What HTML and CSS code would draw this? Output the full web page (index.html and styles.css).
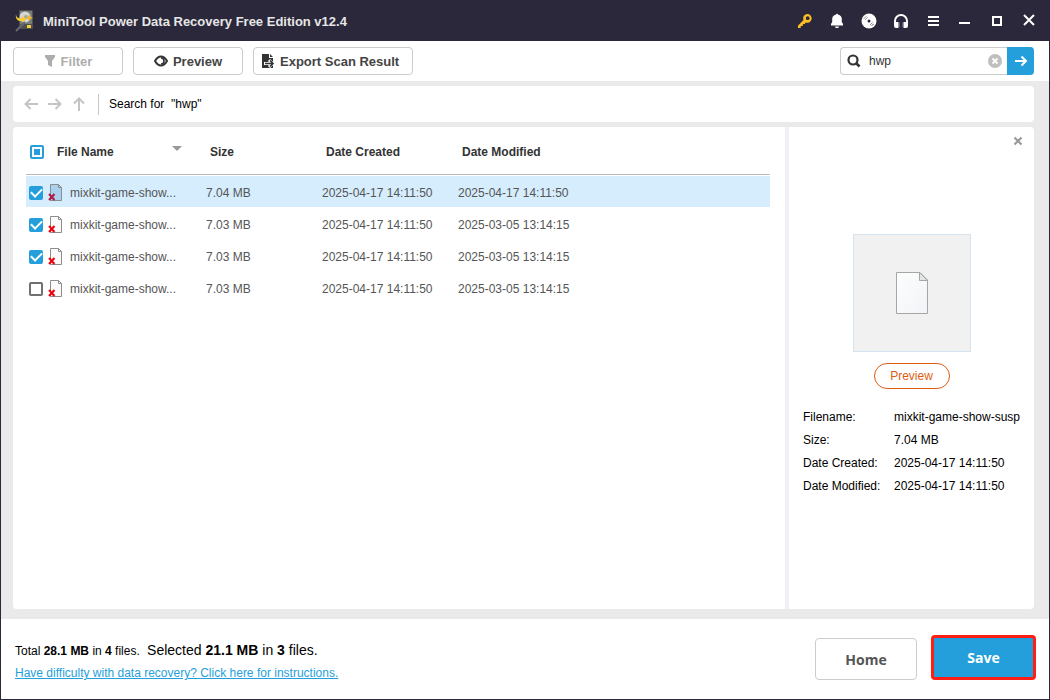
FILE: index.html
```html
<!DOCTYPE html>
<html lang="en">
<head>
    <meta charset="UTF-8">
    <meta name="viewport" content="width=device-width, initial-scale=1.0">
    <title>MiniTool Power Data Recovery</title>
    <link rel="stylesheet" href="styles.css">
</head>
<body>

    <!-- Title bar -->
    <header class="titlebar">
        <svg class="app-icon" width="20" height="22" viewBox="0 0 20 22">
            <rect x="4" y="0" width="14" height="19" rx="1" fill="#4c5052"/>
            <rect x="5" y="1" width="12" height="13" fill="#777b7a"/>
            <circle cx="10" cy="7" r="5.500" fill="#d3d6d2"/>
            <circle cx="11" cy="7" r="2" fill="#a2a5a6"/>
            <path d="M1 4c0 4 3 5 6 4V6l4 3-3 4v-2C3 12 0 9 1 4z" fill="#f5cc2c"/>
            <path d="M14 4l1 2.500L18 8l-3 1-1 2-1-2-3-1 3-1z" fill="#f6b526"/>
            <path d="M1 21l9-9" stroke="#6a6a72" stroke-width="2"/>
            <rect x="12" y="15" width="4" height="3" fill="#f8cf38"/>
        </svg>
        <h1>MiniTool Power Data Recovery Free Edition v12.4</h1>
        <div class="window-tools">
            <button type="button" aria-label="Register">
                <svg width="16" height="16" viewBox="0 0 16 16"><path fill="#fbbf24" fill-rule="evenodd" d="M10 1a4.300 4.300 0 0 0-3.500 6L.9 12.700 1 15h2.500l.4-2h1.700l.5-2h1.600l1-1.500A4.400 4.400 0 1 0 10 1zm.7 2.300a1.900 1.900 0 1 1 0 3.800 1.900 1.900 0 0 1 0-3.800z"/></svg>
            </button>
            <button type="button" aria-label="Notifications">
                <svg width="16" height="16" viewBox="0 0 16 16"><path fill="#fff" d="M8 .5l1 1c2.700.5 3.800 2.500 3.800 4.500v3L14 11v1.500H2V11l1.200-2V6c0-2 1.100-4 3.800-4.500zM6 13.500h4c0 1-.9 1.500-2 1.500s-2-.5-2-1.500z"/></svg>
            </button>
            <button type="button" aria-label="Bootable media">
                <svg width="16" height="16" viewBox="0 0 16 16"><circle cx="8" cy="8" r="7.500" fill="#fff"/><circle cx="8" cy="8" r="1.500" fill="#2a283a"/><path d="M3 5.500L5.500 3M4.500 6.500l2-2M10.500 13l2.500-2.500M9.500 11.500l2-2" stroke="#2a283a" stroke-dasharray="1 .6"/></svg>
            </button>
            <button type="button" aria-label="Support">
                <svg width="16" height="16" viewBox="0 0 16 16"><path d="M2 10V8a6 6 0 0 1 12 0v2" fill="none" stroke="#fff" stroke-width="2"/><path fill="#fff" d="M1 9h4.500v6H3a2 2 0 0 1-2-2zM15 9h-4.500v6H13a2 2 0 0 0 2-2z"/><path d="M6 9.500v4.500M10 9.500v4.500" stroke="#9c9ba5"/></svg>
            </button>
            <button type="button" aria-label="Menu">
                <svg width="16" height="16" viewBox="0 0 16 16"><path d="M3 4h11M3 8h11M3 12h11" stroke="#fff" stroke-width="2"/></svg>
            </button>
            <button type="button" aria-label="Minimize">
                <svg width="16" height="16" viewBox="0 0 16 16"><path d="M2 10h11" stroke="#fff" stroke-width="2"/></svg>
            </button>
            <button type="button" aria-label="Maximize">
                <svg width="16" height="16" viewBox="0 0 16 16"><rect x="4" y="4" width="8" height="8" fill="none" stroke="#fff" stroke-width="2"/></svg>
            </button>
            <button type="button" aria-label="Close">
                <svg width="16" height="16" viewBox="0 0 16 16"><path d="M3 2l10 10M13 2L3 12" stroke="#fff" stroke-width="2"/></svg>
            </button>
        </div>
    </header>

    <!-- Toolbar -->
    <div class="toolbar">
        <button type="button" class="tool" disabled>
            <svg width="12" height="14" viewBox="0 0 12 14"><path fill="#adadad" d="M1 1h10v2L8 7v6l-4-2V7L1 3z"/></svg>
            Filter
        </button>
        <button type="button" class="tool">
            <svg width="14" height="14" viewBox="0 0 14 14"><path d="M1 7c2-3.500 4-4.500 6-4.500s4 1 6 4.500c-2 3.500-4 4.500-6 4.500S3 10.500 1 7z" fill="none" stroke="#333" stroke-width="2"/><path d="M7 4a3 3 0 1 0 0 6 3 3 0 0 1 0-6z" fill="#333"/><path d="M7 4a3 3 0 0 1 0 6" fill="none" stroke="#333" stroke-width="1.600"/></svg>
            Preview
        </button>
        <button type="button" class="tool tool-wide">
            <svg width="14" height="14" viewBox="0 0 14 14"><path fill="#333" d="M1 0h7v4h4v10H1zM9 0l3 3H9z"/><path d="M3 9.500h7M8 6l3.500 3.500L8 13" fill="none" stroke="#fff" stroke-width="3"/><path d="M4 9.500h8M9 6.500l3 3-3 3" fill="none" stroke="#333" stroke-width="1.600"/></svg>
            Export Scan Result
        </button>
        <form class="search">
            <svg width="14" height="14" viewBox="0 0 14 14"><circle cx="6" cy="6" r="4.500" fill="none" stroke="#333" stroke-width="2.200"/><path d="M9 9l3.500 3.500" stroke="#333" stroke-width="2.600"/></svg>
            <input type="text" value="hwp" aria-label="Search files">
            <button type="reset" class="clear" aria-label="Clear">
                <svg width="14" height="14" viewBox="0 0 14 14"><circle cx="7" cy="7" r="7" fill="#bfbfbf"/><path d="M4.500 4.500l5 5M9.500 4.500l-5 5" stroke="#fff" stroke-width="2"/></svg>
            </button>
            <button type="button" class="go" aria-label="Search">
                <svg width="14" height="14" viewBox="0 0 14 14"><path d="M1 7h11M7.500 2.500L12 7l-4.500 4.500" fill="none" stroke="#fff" stroke-width="2"/></svg>
            </button>
        </form>
    </div>

    <main class="workspace">
        <nav class="pathbar">
            <button type="button" aria-label="Back"><svg width="14" height="14" viewBox="0 0 14 14"><path d="M14 7H2M6.500 2L1.500 7l5 5"/></svg></button>
            <button type="button" aria-label="Forward"><svg width="14" height="14" viewBox="0 0 14 14"><path d="M0 7h12M7.500 2l5 5-5 5"/></svg></button>
            <button type="button" aria-label="Up"><svg width="14" height="14" viewBox="0 0 14 14"><path d="M7 14V2M2 6.500l5-5 5 5"/></svg></button>
            <p>Search for&nbsp; "hwp"</p>
        </nav>

        <div class="panels">
            <!-- File list -->
            <section class="files">
                <table>
                    <colgroup>
                        <col class="col-name">
                        <col class="col-size">
                        <col class="col-created">
                        <col>
                    </colgroup>
                    <thead>
                        <tr>
                            <th>
                                <div class="name">
                                    <input type="checkbox" class="check partial" aria-label="Select all">
                                    <span class="heading">File Name</span>
                                    <svg class="sort" width="10" height="6" viewBox="0 0 10 6"><path fill="#999" d="M0 0h10L5 5z"/></svg>
                                </div>
                            </th>
                            <th>Size</th>
                            <th>Date Created</th>
                            <th>Date Modified</th>
                        </tr>
                    </thead>
                    <tbody>
                        <tr class="selected">
                            <td>
                                <div class="name">
                                    <input type="checkbox" class="check" id="file1" checked>
                                    <svg width="14" height="18" viewBox="0 0 14 18"><use href="#deleted-file"/></svg>
                                    <label for="file1">mixkit-game-show...</label>
                                </div>
                            </td>
                            <td>7.04 MB</td>
                            <td>2025-04-17 14:11:50</td>
                            <td>2025-04-17 14:11:50</td>
                        </tr>
                        <tr>
                            <td>
                                <div class="name">
                                    <input type="checkbox" class="check" id="file2" checked>
                                    <svg width="14" height="18" viewBox="0 0 14 18"><use href="#deleted-file"/></svg>
                                    <label for="file2">mixkit-game-show...</label>
                                </div>
                            </td>
                            <td>7.03 MB</td>
                            <td>2025-04-17 14:11:50</td>
                            <td>2025-03-05 13:14:15</td>
                        </tr>
                        <tr>
                            <td>
                                <div class="name">
                                    <input type="checkbox" class="check" id="file3" checked>
                                    <svg width="14" height="18" viewBox="0 0 14 18"><use href="#deleted-file"/></svg>
                                    <label for="file3">mixkit-game-show...</label>
                                </div>
                            </td>
                            <td>7.03 MB</td>
                            <td>2025-04-17 14:11:50</td>
                            <td>2025-03-05 13:14:15</td>
                        </tr>
                        <tr>
                            <td>
                                <div class="name">
                                    <input type="checkbox" class="check" id="file4">
                                    <svg width="14" height="18" viewBox="0 0 14 18"><use href="#deleted-file"/></svg>
                                    <label for="file4">mixkit-game-show...</label>
                                </div>
                            </td>
                            <td>7.03 MB</td>
                            <td>2025-04-17 14:11:50</td>
                            <td>2025-03-05 13:14:15</td>
                        </tr>
                    </tbody>
                </table>
            </section>

            <!-- Preview panel -->
            <aside class="details">
                <button type="button" class="close-details" aria-label="Close preview">
                    <svg width="10" height="10" viewBox="0 0 10 10"><path d="M1.500 1.500l7 7M8.500 1.500l-7 7" stroke="#999" stroke-width="2.200"/></svg>
                </button>
                <div class="thumb">
                    <svg width="34" height="44" viewBox="0 0 34 44">
                        <defs>
                            <linearGradient id="paper" x1="0" y1="0" x2="1" y2="1">
                                <stop offset="0" stop-color="#fdfdfd"/>
                                <stop offset="1" stop-color="#f1f4f7"/>
                            </linearGradient>
                        </defs>
                        <path d="M1.500 1.500H25L32.500 9v33.500h-31z" fill="url(#paper)" stroke="#a5a7a6"/>
                        <path d="M24.500 1.500v8h8z" fill="#e4e5e5" stroke="#a5a7a6"/>
                    </svg>
                </div>
                <button type="button" class="preview">Preview</button>
                <dl>
                    <dt>Filename:</dt><dd>mixkit-game-show-susp</dd>
                    <dt>Size:</dt><dd>7.04 MB</dd>
                    <dt>Date Created:</dt><dd>2025-04-17 14:11:50</dd>
                    <dt>Date Modified:</dt><dd>2025-04-17 14:11:50</dd>
                </dl>
            </aside>
        </div>
    </main>

    <!-- Footer -->
    <footer class="footer">
        <div class="summary">
            <p>Total <b>28.1 MB</b> in <b>4</b> files. <span class="chosen">Selected <b>21.1 MB</b> in <b>3</b> files.</span></p>
            <a href="#help">Have difficulty with data recovery? Click here for instructions.</a>
        </div>
        <button type="button" class="home">Home</button>
        <button type="button" class="save">Save</button>
    </footer>

    <!-- Shared file icon -->
    <svg class="sprite" width="0" height="0">
        <symbol id="deleted-file" viewBox="0 0 14 18">
            <path class="page" d="M2.500 .5h8l3 3v13h-11z"/>
            <path class="fold" d="M10.500 .5v3h3"/>
            <path class="cross" d="M1 10l5.500 6M6.500 10L1 16"/>
        </symbol>
    </svg>

</body>
</html>
```
FILE: styles.css
```css
* {
    box-sizing: border-box;
}

body {
    margin: 0;
    min-height: 100vh;
    display: flex;
    flex-direction: column;
    border: 1px solid #2a283a;
    background-color: #fff;
    color: #000;
    font-family: "Liberation Sans", Arial, sans-serif;
    font-size: 12px;
}

h1, p, dl, dd {
    margin: 0;
}

button {
    padding: 0;
    border: 0;
    background: none;
    font-family: inherit;
    cursor: pointer;
}

svg {
    display: block;
    flex: none;
}

.sprite {
    position: absolute;
}

/* Title bar */
.titlebar {
    display: flex;
    align-items: center;
    height: 40px;
    padding: 0 4px 0 14px;
    background-color: #2a283a;
}

.titlebar h1 {
    margin-left: 8px;
    color: #e6e6e6;
    font-size: 13px;
}

.window-tools {
    display: flex;
    margin-left: auto;
}

.window-tools button {
    display: flex;
    justify-content: center;
    width: 32px;
}

/* Toolbar */
.toolbar {
    display: flex;
    align-items: center;
    gap: 10px;
    height: 40px;
    padding: 0 15px 0 12px;
}

.tool {
    display: flex;
    align-items: center;
    justify-content: center;
    gap: 5px;
    width: 110px;
    height: 28px;
    border: 1px solid #ccc;
    border-radius: 4px;
    color: #444;
    font-size: 13px;
    font-weight: bold;
}

.tool-wide {
    justify-content: flex-start;
    width: 160px;
    padding-left: 7px;
}

.tool:disabled {
    color: #adadad;
}

.search {
    display: flex;
    align-items: center;
    width: 194px;
    height: 28px;
    margin-left: auto;
    padding-left: 6px;
    border: 1px solid #ccc;
    border-right: 0;
    border-radius: 4px;
}

.search input {
    flex: 1;
    min-width: 0;
    padding: 0 8px;
    border: 0;
    outline: 0;
    background: none;
    color: #333;
    font-family: inherit;
    font-size: 12px;
}

.go {
    display: flex;
    align-items: center;
    justify-content: center;
    width: 27px;
    height: 28px;
    margin-left: 5px;
    border-radius: 0 4px 4px 0;
    background-color: #259fdb;
}

/* Work area */
.workspace {
    flex: 1;
    display: flex;
    flex-direction: column;
    gap: 5px;
    padding: 5px 15px 10px 12px;
    background-color: #eaeaea;
}

.pathbar {
    display: flex;
    align-items: center;
    gap: 10px;
    height: 36px;
    padding: 0 11px;
    border-radius: 4px;
    background-color: #fff;
}

.pathbar path {
    fill: none;
    stroke: #c4c4c4;
    stroke-width: 2;
}

.pathbar p {
    margin-left: 2px;
    padding-left: 10px;
    border-left: 1px solid #c8c8c8;
    line-height: 21px;
}

.panels {
    flex: 1;
    display: flex;
    border-radius: 4px;
    background-color: #fff;
}

/* File list */
.files {
    flex: 1;
    min-width: 0;
    padding: 0 15px 0 13px;
}

.files table {
    width: 100%;
    table-layout: fixed;
    border-collapse: separate;
    border-spacing: 0 1px;
}

.col-name {
    width: 176px;
}

.col-size {
    width: 116px;
}

.col-created {
    width: 136px;
}

.files th {
    height: 47px;
    padding: 2px 0 0 8px;
    border-bottom: 1px solid #b9b9b9;
    color: #333;
    text-align: left;
}

.files td {
    height: 31px;
    padding: 2px 0 0 4px;
    color: #555;
    white-space: nowrap;
}

.files th:first-child {
    padding-left: 4px;
}

.files td:first-child {
    padding-left: 3px;
}

.selected td {
    background-color: #d6edfe;
}

.name {
    display: flex;
    align-items: center;
    gap: 5px;
}

.name label {
    margin-left: 3px;
}

.heading {
    margin-left: 8px;
}

.sort {
    margin: 0 20px 6px auto;
}

.check {
    appearance: none;
    display: grid;
    place-content: center;
    flex: none;
    width: 14px;
    height: 14px;
    margin: 0;
    border: 2px solid #707070;
    border-radius: 2px;
    background-color: #fff;
}

.check:checked {
    border-color: #259fdb;
    background-color: #259fdb;
}

.check:checked::before {
    content: "";
    width: 9px;
    height: 5px;
    margin-bottom: 3px;
    border: solid #fff;
    border-width: 0 0 2px 2px;
    transform: rotate(-45deg);
}

.partial {
    border-color: #259fdb;
}

.partial::before {
    content: "";
    width: 6px;
    height: 6px;
    background-color: #259fdb;
}

.page {
    fill: var(--page-fill, #fafafa);
    stroke: #8c8c8c;
}

.fold {
    fill: none;
    stroke: #8c8c8c;
}

.cross {
    stroke: var(--cross, #f0000c);
    stroke-width: 2;
}

.selected {
    --page-fill: #a9d0ef;
    --cross: #b01840;
}

/* Preview panel */
.details {
    display: flex;
    flex-direction: column;
    align-items: center;
    width: 249px;
    padding: 9px 11px 0;
    border-left: 4px solid #eff1f5;
}

.close-details {
    align-self: flex-end;
}

.thumb {
    display: grid;
    place-content: center;
    width: 118px;
    height: 118px;
    margin-top: 88px;
    border: 1px solid #d3e3f2;
    background-color: #f1f1f1;
}

.preview {
    width: 76px;
    height: 26px;
    margin-top: 11px;
    border: 1px solid #dc5d12;
    border-radius: 13px;
    color: #dc5d12;
    font-size: 12px;
}

.details dl {
    display: grid;
    grid-template-columns: 91px 1fr;
    width: 100%;
    margin-top: 17px;
    padding-left: 3px;
    line-height: 23px;
}

.details dd {
    min-width: 0;
    overflow: hidden;
    white-space: nowrap;
}

/* Footer */
.footer {
    display: flex;
    align-items: center;
    height: 80px;
    padding: 0 13px 0 14px;
}

.summary {
    margin-right: auto;
    padding-top: 5px;
    line-height: 22px;
}

.chosen {
    margin-left: 4px;
    font-size: 14px;
}

.summary a {
    color: #259fdb;
}

.home, .save {
    border-radius: 4px;
    font-family: "Open Sans", sans-serif;
    font-size: 14px;
    font-weight: bold;
}

.home {
    width: 102px;
    height: 42px;
    border: 1px solid #ccc;
    color: #555;
}

.save {
    width: 105px;
    height: 45px;
    margin: 0 0 3px 14px;
    border: 3px solid #ff1e14;
    background-color: #259fdb;
    color: #fff;
}
```
